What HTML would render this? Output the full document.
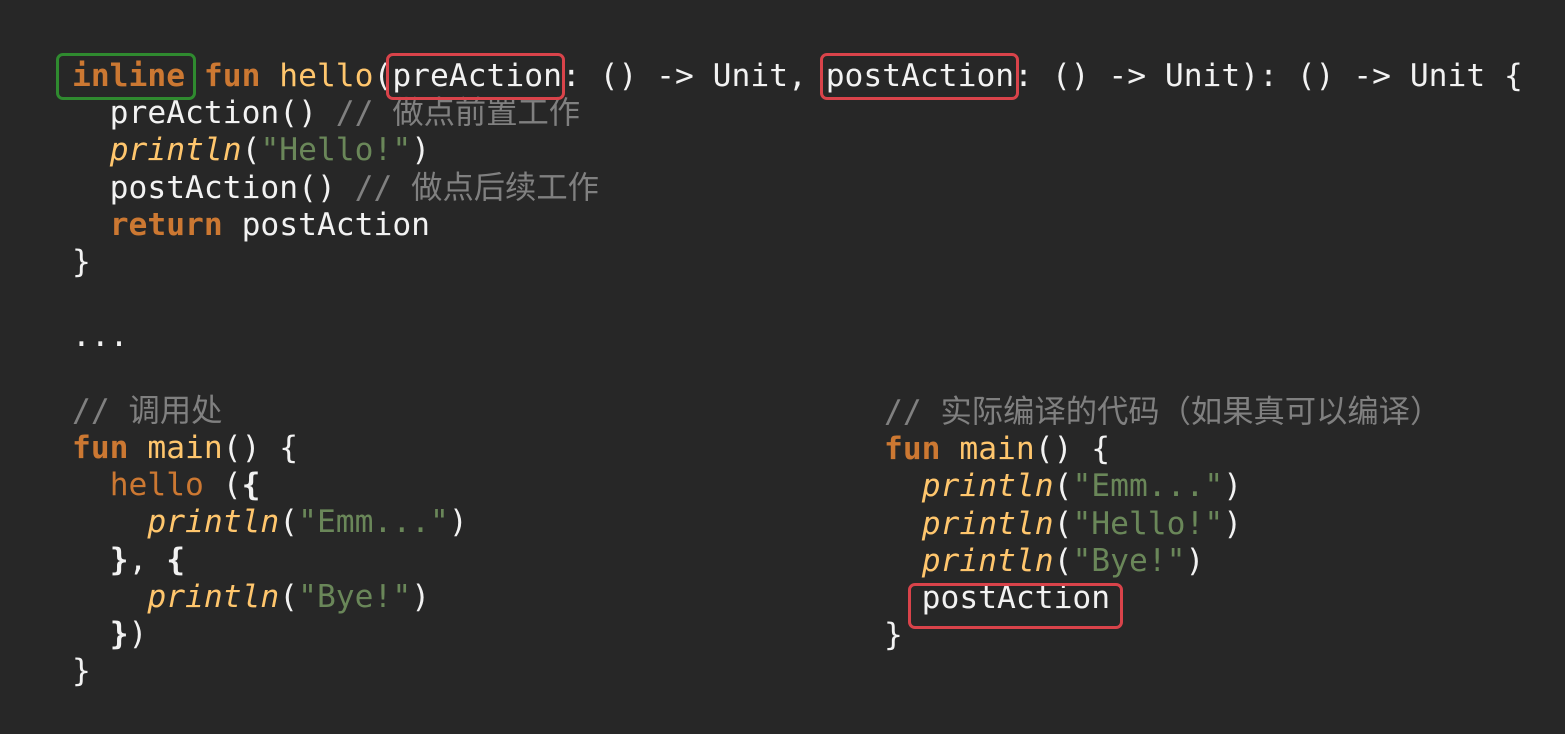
<!DOCTYPE html>
<html><head><meta charset="utf-8"><style>
html,body{margin:0;padding:0;background:#272727;width:1565px;height:734px;overflow:hidden;position:relative}
pre{position:absolute;margin:0;font-family:"DejaVu Sans Mono","Noto Sans CJK SC",monospace;font-size:31.3px;line-height:37.2px;color:#f2f2f2;white-space:pre}
.k{color:#cc7832;font-weight:bold}
.h{color:#cc7832}
.f{color:#ffc66d}
.i{color:#ffc66d;font-style:italic}
.s{color:#6a8759}
.c{color:#808080}
.b{font-weight:bold}
.box{position:absolute;border:3px solid #d9434a;border-radius:7px;box-sizing:border-box}
</style></head><body>
<pre style="left:72px;top:58px"><span class="k">inline</span> <span class="k">fun</span> <span class="f">hello</span>(preAction: () -&gt; Unit, postAction: () -&gt; Unit): () -&gt; Unit {
  preAction() <span class="c">// 做点前置工作</span>
  <span class="i">println</span>(<span class="s">"Hello!"</span>)
  postAction() <span class="c">// 做点后续工作</span>
  <span class="k">return</span> postAction
}

...

<span class="c">// 调用处</span>
<span class="k">fun</span> <span class="f">main</span>() {
  <span class="h">hello</span> (<span class="b">{</span>
    <span class="i">println</span>(<span class="s">"Emm..."</span>)
  <span class="b">}</span>, <span class="b">{</span>
    <span class="i">println</span>(<span class="s">"Bye!"</span>)
  <span class="b">}</span>)
}</pre>
<pre style="left:884px;top:394px"><span class="c">// 实际编译的代码（如果真可以编译）</span>
<span class="k">fun</span> <span class="f">main</span>() {
  <span class="i">println</span>(<span class="s">"Emm..."</span>)
  <span class="i">println</span>(<span class="s">"Hello!"</span>)
  <span class="i">println</span>(<span class="s">"Bye!"</span>)
  postAction
}</pre>
<div class="box" style="left:56px;top:53px;width:140px;height:47px;border-color:#2f8a2f"></div>
<div class="box" style="left:386px;top:53px;width:179px;height:47px"></div>
<div class="box" style="left:820px;top:53px;width:199px;height:47px"></div>
<div class="box" style="left:908px;top:583px;width:215px;height:46px"></div>
</body></html>
